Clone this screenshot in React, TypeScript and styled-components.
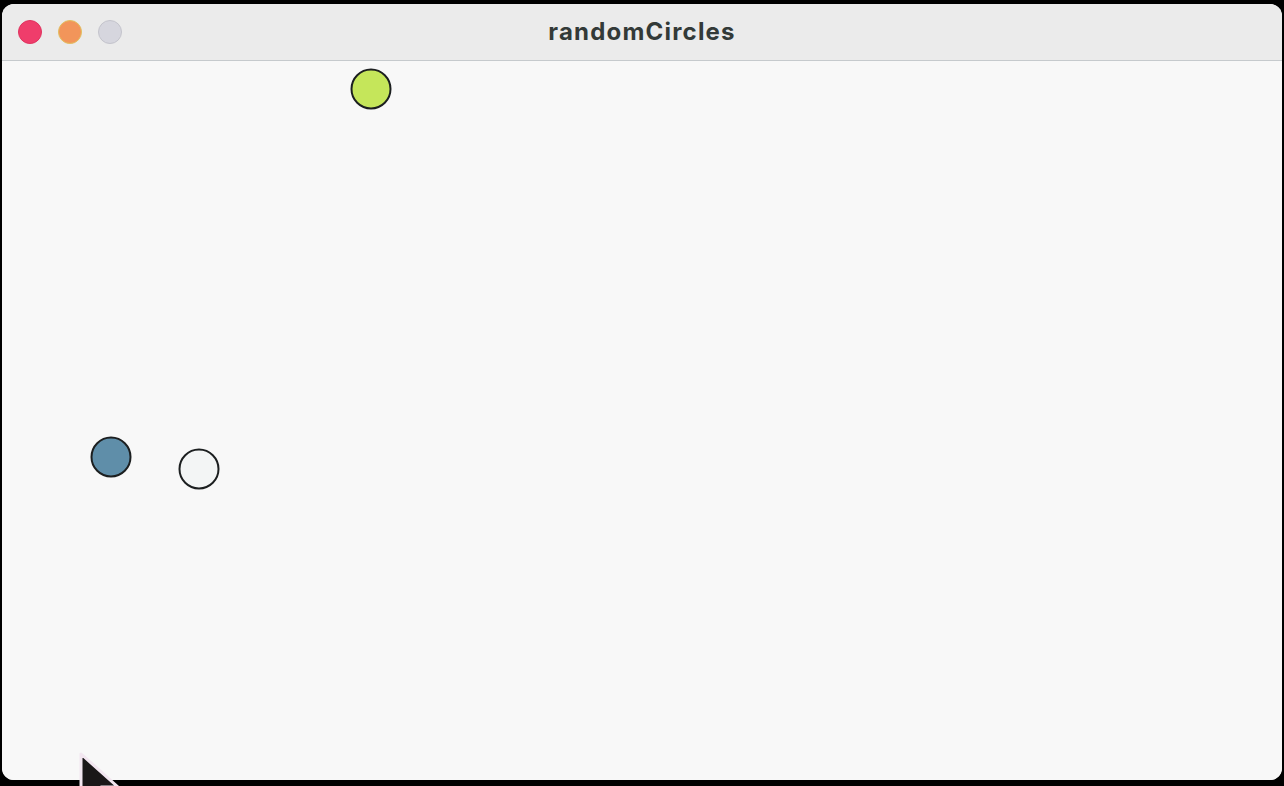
import styled, { createGlobalStyle } from "styled-components";

const GlobalStyle = createGlobalStyle`
  html, body {
    margin: 0;
    padding: 0;
    background: #000;
    overflow: hidden;
  }
  body {
    font-family: "Inter", "Liberation Sans", sans-serif;
  }
`;

const Desktop = styled.div`
  position: relative;
  width: 1284px;
  height: 786px;
  padding: 4px 2px 6px 2px;
  box-sizing: border-box;
  background: #000;
`;

const Window = styled.div`
  width: 1280px;
  height: 776px;
  border-radius: 12px;
  overflow: hidden;
  display: flex;
  flex-direction: column;
  background: #f8f8f8;
`;

const TitleBar = styled.div`
  position: relative;
  height: 56px;
  flex: 0 0 56px;
  display: flex;
  align-items: center;
  justify-content: center;
  background: #ebebeb;
  border-bottom: 1px solid #c6cacd;
`;

const Lights = styled.div`
  position: absolute;
  left: 16px;
  top: 16px;
  display: flex;
  gap: 16px;
`;

const Light = styled.span<{ $color: string; $edge: string }>`
  width: 24px;
  height: 24px;
  border-radius: 50%;
  box-sizing: border-box;
  background: ${(p) => p.$color};
  border: 1px solid ${(p) => p.$edge};
`;

const Title = styled.h1`
  margin: 0 0 2px 0;
  font-size: 24px;
  font-weight: 700;
  color: #333a38;
  letter-spacing: 1.2px;
`;

const Canvas = styled.div`
  position: relative;
  flex: 1;
  background: #f8f8f8;
`;

const Dot = styled.span<{ $fill: string }>`
  position: absolute;
  width: 41px;
  height: 41px;
  border-radius: 50%;
  box-sizing: border-box;
  border: 2px solid #1c1f20;
  background: ${(p) => p.$fill};
  transform: translate(-50%, -50%);
`;

const Pointer = styled.svg`
  position: absolute;
  left: 76px;
  top: 750px;
  width: 48px;
  height: 60px;
`;

const circles = [
  { x: 369, y: 28, fill: "#c5e65a" },
  { x: 109, y: 396, fill: "#5f8ea9" },
  { x: 197, y: 408, fill: "#f3f5f5" },
];

export default function App() {
  return (
    <>
      <GlobalStyle />
      <Desktop>
        <Window>
          <TitleBar>
            <Lights>
              <Light $color="#ef3d6b" $edge="#e0335f" />
              <Light $color="#f2955a" $edge="#e2c060" />
              <Light $color="#d6d6de" $edge="#c4c4cc" />
            </Lights>
            <Title>randomCircles</Title>
          </TitleBar>
          <Canvas>
            {circles.map((c, i) => (
              <Dot key={i} $fill={c.fill} style={{ left: c.x, top: c.y }} />
            ))}
          </Canvas>
        </Window>
        <Pointer viewBox="0 0 48 60">
          <path
            d="M5 4 L5 52 L17 40 L25 58 L33 54 L25 37 L42 37 Z"
            fill="#1a1718"
            stroke="#f2e6f0"
            strokeWidth="3"
            strokeLinejoin="round"
          />
        </Pointer>
      </Desktop>
    </>
  );
}
